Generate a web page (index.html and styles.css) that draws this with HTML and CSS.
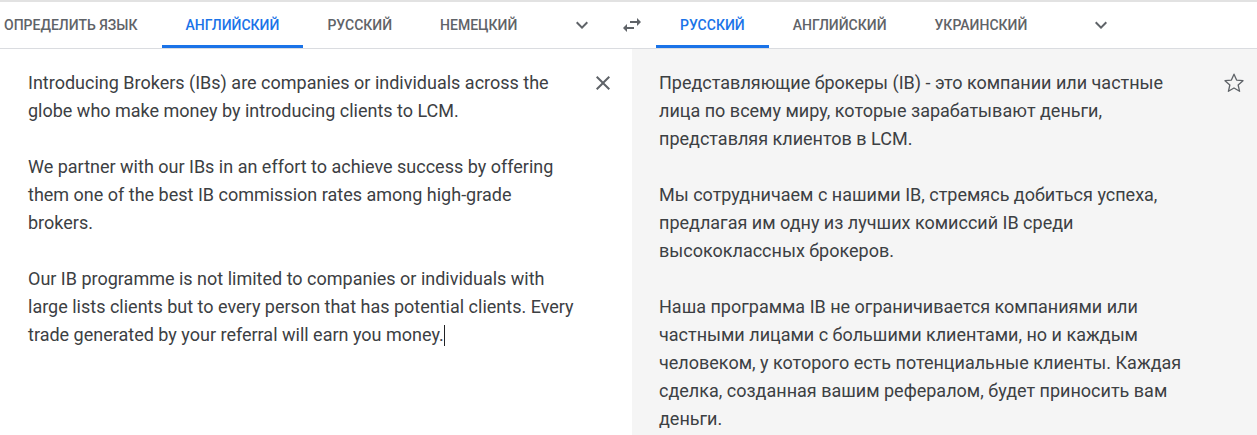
FILE: index.html
```html
<!DOCTYPE html>
<html lang="ru">
<head>
<meta charset="utf-8">
<link rel="stylesheet" href="styles.css">
</head>
<body>
<div class="header">
  <div class="tabs src">
    <div class="tab first">Определить язык</div>
    <div class="tab active">Английский</div>
    <div class="tab">Русский</div>
    <div class="tab">Немецкий</div>
    <div class="icon-btn more-src">
      <svg width="24" height="24" viewBox="0 0 24 24"><path d="M16.59 8.59L12 13.17 7.41 8.59 6 10l6 6 6-6z" fill="#5f6368"/></svg>
    </div>
  </div>
  <div class="icon-btn swap">
    <svg width="24" height="24" viewBox="0 0 24 24"><path d="M6.99 11L3 15l3.99 4v-3H14v-2H6.99v-3zM21 9l-3.99-4v3H10v2h7.01v3L21 9z" fill="#5f6368"/></svg>
  </div>
  <div class="tabs tgt">
    <div class="tab active">Русский</div>
    <div class="tab">Английский</div>
    <div class="tab">Украинский</div>
    <div class="icon-btn more-tgt">
      <svg width="24" height="24" viewBox="0 0 24 24"><path d="M16.59 8.59L12 13.17 7.41 8.59 6 10l6 6 6-6z" fill="#5f6368"/></svg>
    </div>
  </div>
</div>
<div class="panels">
  <div class="panel source">
    <div class="text">
      <p>Introducing Brokers (IBs) are companies or individuals across the<br>globe who make money by introducing clients to LCM.</p>
      <p>We partner with our IBs in an effort to achieve success by offering<br>them one of the best IB commission rates among high-grade<br>brokers.</p>
      <p>Our IB programme is not limited to companies or individuals with<br>large lists clients but to every person that has potential clients. Every<br>trade generated by your referral will earn you money.<span class="caret"></span></p>
    </div>
    <div class="icon-btn clear">
      <svg width="24" height="24" viewBox="0 0 24 24"><path d="M19 6.41L17.59 5 12 10.59 6.41 5 5 6.41 10.59 12 5 17.59 6.41 19 12 13.41 17.59 19 19 17.59 13.41 12z" fill="#5f6368"/></svg>
    </div>
  </div>
  <div class="panel target">
    <div class="text">
      <p>Представляющие брокеры (IB) - это компании или частные<br>лица по всему миру, которые зарабатывают деньги,<br>представляя клиентов в LCM.</p>
      <p>Мы сотрудничаем с нашими IB, стремясь добиться успеха,<br>предлагая им одну из лучших комиссий IB среди<br>высококлассных брокеров.</p>
      <p>Наша программа IB не ограничивается компаниями или<br>частными лицами с большими клиентами, но и каждым<br>человеком, у которого есть потенциальные клиенты. Каждая<br>сделка, созданная вашим рефералом, будет приносить вам<br>деньги.</p>
    </div>
    <div class="icon-btn star">
      <svg width="24" height="24" viewBox="0 0 24 24"><path d="M12 3.2l2.6 5.9 6.4.6-4.85 4.3 1.45 6.3L12 17l-5.6 3.3 1.45-6.3L3 9.7l6.4-.6z" fill="none" stroke="#5f6368" stroke-width="1.3" stroke-linejoin="round"/></svg>
    </div>
  </div>
</div>
</body>
</html>
```

FILE: styles.css
```css
* { box-sizing: border-box; }
html, body { margin: 0; background: #fff; }
body { font-family: Roboto, "Noto Sans", Arial, sans-serif; overflow: hidden; height: 435px; }

.header {
  display: flex;
  height: 49px;
  border-top: 2px solid #e2e2e2;
  border-bottom: 1px solid #dadce0;
}
.tabs { display: flex; align-items: stretch; }
.tabs.src { width: 608px; }
.tab {
  padding: 0 24px;
  font-size: 14px;
  font-weight: 500;
  text-transform: uppercase;
  color: #5f6368;
  display: flex;
  align-items: center;
  border-bottom: 3px solid transparent;
  padding-top: 2px;
  white-space: nowrap;
}
.tab.first { padding-left: 4px; }
.tab.active { color: #1a73e8; border-bottom-color: #1a73e8; }

.icon-btn {
  width: 48px;
  display: flex;
  align-items: center;
  justify-content: center;
}
.more-src { margin-left: 17px; }
.more-tgt { margin-left: 26px; }
.swap { width: 48px; }

.panels {
  display: grid;
  grid-template-columns: 632px 1fr;
  height: 386px;
  overflow: hidden;
}
.panel {
  display: flex;
  align-items: flex-start;
}
.panel.source { padding: 20px 0 0 28px; }
.panel.target { background: #f5f5f5; padding: 20px 0 0 27px; }

.text {
  font-size: 18px;
  line-height: 28px;
  color: #3c4043;
  white-space: nowrap;
}
.text p { margin: 0 0 28px; }
.text p:last-child { margin-bottom: 0; }
.source .text { width: 563px; }
.target .text { width: 562px; }

.clear, .star { height: 28px; width: 24px; }
.star { margin-left: 1px; }

.caret {
  display: inline-block;
  width: 1px;
  height: 21px;
  background: #202124;
  vertical-align: -5px;
}
```
